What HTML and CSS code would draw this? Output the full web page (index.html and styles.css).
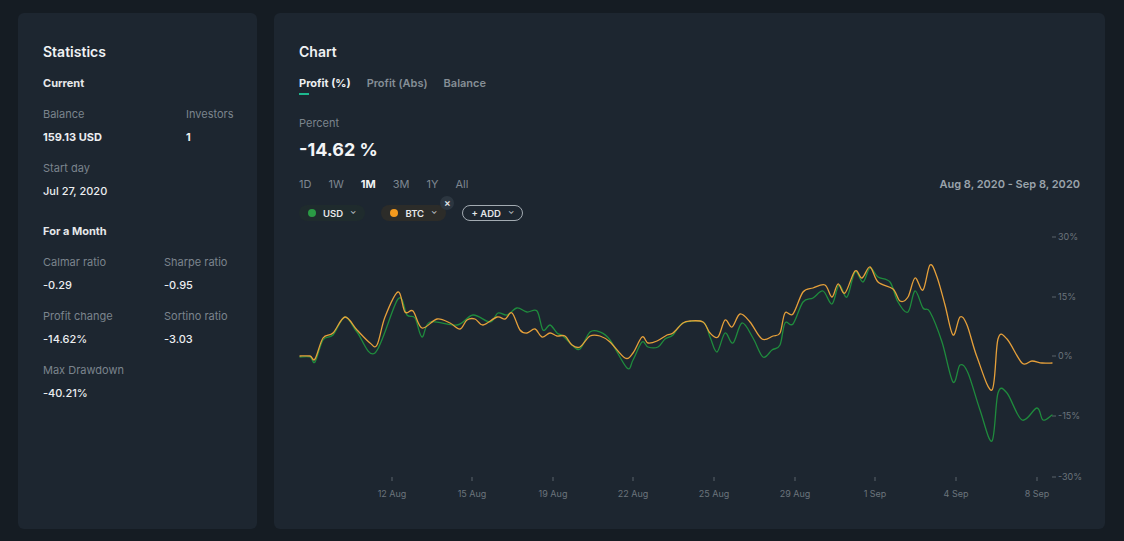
FILE: index.html
```html
<!DOCTYPE html>
<html lang="en">
<head>
  <meta charset="UTF-8" />
  <title>Statistics</title>
  <link rel="stylesheet" href="styles.css">
</head>
<body>

  <div class="card stats">
    <h2 class="title">Statistics</h2>

    <h3 class="section">Current</h3>
    <div class="grid grid-current">
      <div class="item"><div class="label">Balance</div><div class="value strong">159.13 USD</div></div>
      <div class="item"><div class="label">Investors</div><div class="value strong">1</div></div>
      <div class="item"><div class="label">Start day</div><div class="value">Jul 27, 2020</div></div>
    </div>

    <h3 class="section month">For a Month</h3>
    <div class="grid grid-month">
      <div class="item"><div class="label">Calmar ratio</div><div class="value">-0.29</div></div>
      <div class="item"><div class="label">Sharpe ratio</div><div class="value">-0.95</div></div>
      <div class="item"><div class="label">Profit change</div><div class="value">-14.62%</div></div>
      <div class="item"><div class="label">Sortino ratio</div><div class="value">-3.03</div></div>
      <div class="item"><div class="label">Max Drawdown</div><div class="value">-40.21%</div></div>
    </div>
  </div>

  <div class="card chart">
    <h2 class="title">Chart</h2>

    <div class="tabs">
      <span class="tab active">Profit (%)</span>
      <span class="tab">Profit (Abs)</span>
      <span class="tab">Balance</span>
    </div>

    <div class="label percent">Percent</div>
    <div class="big">-14.62 %</div>

    <div class="toolbar">
      <div class="periods">
        <span>1D</span><span>1W</span><span class="on">1M</span><span>3M</span><span>1Y</span><span>All</span>
      </div>
      <div class="range">Aug 8, 2020 - Sep 8, 2020</div>
    </div>

    <div class="chips">
      <span class="chip usd"><i class="dot"></i>USD<span class="caret">&#8964;</span></span>
      <span class="chip btc"><i class="dot"></i>BTC<span class="caret">&#8964;</span><span class="close">&times;</span></span>
      <span class="chip add">+ ADD<span class="caret">&#8964;</span></span>
    </div>

    <svg class="plot" width="790" height="285" viewBox="299 225 790 285">
      <g class="yaxis">
        <line x1="1052" y1="237" x2="1056" y2="237"/><text x="1058" y="240">30%</text>
        <line x1="1052" y1="297" x2="1056" y2="297"/><text x="1058" y="300">15%</text>
        <line x1="1052" y1="356" x2="1056" y2="356"/><text x="1058" y="359">0%</text>
        <line x1="1052" y1="416" x2="1056" y2="416"/><text x="1058" y="419">-15%</text>
        <line x1="1052" y1="477" x2="1056" y2="477"/><text x="1058" y="480">-30%</text>
      </g>
      <g class="xaxis">
        <line x1="392" y1="477" x2="392" y2="481"/><text x="392" y="497">12 Aug</text>
        <line x1="472" y1="477" x2="472" y2="481"/><text x="472" y="497">15 Aug</text>
        <line x1="553" y1="477" x2="553" y2="481"/><text x="553" y="497">19 Aug</text>
        <line x1="633" y1="477" x2="633" y2="481"/><text x="633" y="497">22 Aug</text>
        <line x1="714" y1="477" x2="714" y2="481"/><text x="714" y="497">25 Aug</text>
        <line x1="795" y1="477" x2="795" y2="481"/><text x="795" y="497">29 Aug</text>
        <line x1="875" y1="477" x2="875" y2="481"/><text x="875" y="497">1 Sep</text>
        <line x1="956" y1="477" x2="956" y2="481"/><text x="956" y="497">4 Sep</text>
        <line x1="1037" y1="477" x2="1037" y2="481"/><text x="1037" y="497">8 Sep</text>
      </g>
      <!-- USD -->
      <polyline class="line green" points="300,357 310,357 315,362 323,340 333,335 345,317 357,332 375,353 398,299 407,315 415,318 422,337 430,322 457,325 473,315 490,322 498,313 507,315 517,308 527,312 537,311 543,330 550,325 557,333 563,336 572,345 580,349 590,332 600,332 610,340 627,368 633,360 642,342 648,347 658,347 665,339 673,335 683,323 703,322 710,337 717,352 725,333 733,343 742,323 753,338 763,357 772,350 780,345 785,323 793,324 803,302 813,298 823,291 832,304 839,285 847,297 855,272 863,282 870,268 878,277 890,282 898,302 908,312 915,291 923,308 930,312 942,342 953,382 960,365 968,373 980,410 992,441 998,393 1007,393 1022,420 1037,408 1043,420 1052,415"/>
      <!-- BTC -->
      <polyline class="line orange" points="300,356 310,356 315,359 323,338 333,333 345,317 357,330 370,343 377,345 385,317 398,292 405,312 413,311 422,328 437,319 450,323 460,329 467,320 475,319 483,325 497,317 505,319 512,313 520,330 527,333 535,329 542,337 550,333 557,336 565,336 572,345 580,347 590,336 600,336 610,342 625,358 633,353 642,337 648,343 657,341 667,335 673,333 683,323 690,321 703,322 710,333 718,337 725,320 732,327 740,314 750,322 762,339 773,336 780,333 785,313 793,314 803,292 813,288 825,285 832,297 838,284 845,293 855,271 862,278 870,267 878,282 893,289 900,301 908,297 915,278 923,290 930,265 937,277 945,305 953,335 960,317 967,325 977,357 992,390 998,339 1007,339 1022,363 1032,361 1042,363 1052,363"/>
    </svg>
  </div>

  <script>
    // smooth the polylines into curves
    document.querySelectorAll('polyline.line').forEach(line => {
      const pts = line.getAttribute('points').trim().split(/\s+/).map(p => p.split(',').map(Number));
      let d = `M${pts[0][0]},${pts[0][1]}`;
      for (let i = 0; i < pts.length - 1; i++) {
        const p0 = pts[i - 1] || pts[i];
        const p1 = pts[i];
        const p2 = pts[i + 1];
        const p3 = pts[i + 2] || p2;
        const c1x = p1[0] + (p2[0] - p0[0]) / 6;
        const c1y = p1[1] + (p2[1] - p0[1]) / 6;
        const c2x = p2[0] - (p3[0] - p1[0]) / 6;
        const c2y = p2[1] - (p3[1] - p1[1]) / 6;
        d += ` C${c1x},${c1y} ${c2x},${c2y} ${p2[0]},${p2[1]}`;
      }
      const path = document.createElementNS('http://www.w3.org/2000/svg', 'path');
      path.setAttribute('d', d);
      path.setAttribute('class', line.getAttribute('class'));
      line.replaceWith(path);
    });
  </script>
</body>
</html>
```

FILE: styles.css
```css
body {
  margin: 0;
  padding: 13px 19px 12px 18px;
  background: #151c23;
  color: #e6e8ea;
  font-family: Inter, 'Noto Sans', sans-serif;
  display: flex;
  gap: 17px;
  height: 516px;
}

.card {
  background: #1d2630;
  border-radius: 6px;
  padding: 30px 25px 0 25px;
  box-sizing: border-box;
}

.stats {
  width: 239px;
  flex: none;
}

.chart {
  flex: 1;
  min-width: 0;
  display: flex;
  flex-direction: column;
}

.title {
  margin: 0;
  font-size: 14px;
  line-height: 18px;
  font-weight: 600;
  color: #f0f2f4;
}

.section {
  margin: 15px 0 17px;
  font-size: 11px;
  line-height: 14px;
  font-weight: 700;
}

.section.month {
  margin-top: 26px;
}

.grid {
  display: grid;
  row-gap: 17px;
}

.grid-current {
  grid-template-columns: 143px auto;
}

.grid-month {
  grid-template-columns: 121px auto;
}

.label {
  font-size: 11px;
  line-height: 14px;
  color: #7b848d;
}

.value {
  margin-top: 9px;
  font-size: 11px;
  line-height: 14px;
  font-weight: 500;
  color: #eceef0;
}

.value.strong {
  font-weight: 700;
}

/* chart card */
.tabs {
  display: flex;
  gap: 16px;
  margin-top: 15px;
  font-size: 11px;
  line-height: 14px;
  font-weight: 600;
  color: #858e96;
}

.tab.active {
  color: #eef0f2;
  font-weight: 700;
  position: relative;
}

.tab.active::after {
  content: "";
  position: absolute;
  left: 0;
  top: 17px;
  width: 10px;
  height: 1.5px;
  background: #1db88e;
}

.percent {
  margin-top: 26px;
}

.big {
  margin-top: 8px;
  font-size: 18px;
  line-height: 24px;
  font-weight: 700;
  color: #f2f4f6;
}

.toolbar {
  display: flex;
  justify-content: space-between;
  align-items: center;
  margin-top: 15px;
  font-size: 11px;
  line-height: 14px;
}

.periods {
  display: flex;
  gap: 17px;
  color: #7e8790;
}

.periods .on {
  color: #f0f2f4;
  font-weight: 700;
}

.range {
  color: #9aa3ab;
  font-weight: 600;
}

.chips {
  display: flex;
  gap: 16px;
  margin-top: 14px;
  font-size: 9.5px;
  font-weight: 600;
}

.chip {
  display: inline-flex;
  align-items: center;
  height: 16px;
  padding: 0 9px 0 9px;
  border-radius: 8px;
  color: #e6e8ea;
  position: relative;
}

.chip .dot {
  width: 8px;
  height: 8px;
  border-radius: 50%;
  margin-right: 7px;
}

.chip .caret {
  font-size: 8px;
  line-height: 8px;
  margin-left: 7px;
  margin-top: -5px;
  color: #b8bec4;
}

.usd {
  background: #1f2b2d;
}

.usd .dot {
  background: #2a9a44;
}

.btc {
  background: #2c2c29;
}

.btc .dot {
  background: #f49a1e;
}

.close {
  position: absolute;
  right: -8px;
  top: -9px;
  width: 14px;
  height: 14px;
  border-radius: 50%;
  background: #2c3640;
  color: #e6e8ea;
  font-size: 10px;
  line-height: 13px;
  text-align: center;
}

.add {
  border: 1px solid #a3abb2;
  height: 14px;
  padding: 0 8px;
  border-radius: 9px;
}

.plot {
  margin-top: 4px;
  display: block;
  flex: none;
}

.plot text {
  font-family: Inter, 'Noto Sans', sans-serif;
  font-size: 9px;
  fill: #6b747c;
}

.plot line {
  stroke: #5a636b;
  stroke-width: 1;
}

.xaxis text {
  text-anchor: middle;
}

.line {
  fill: none;
  stroke-width: 1.3;
  stroke-linejoin: round;
  stroke-linecap: round;
}

.green {
  stroke: #1f8b3d;
}

.orange {
  stroke: #e6a03a;
}
```
